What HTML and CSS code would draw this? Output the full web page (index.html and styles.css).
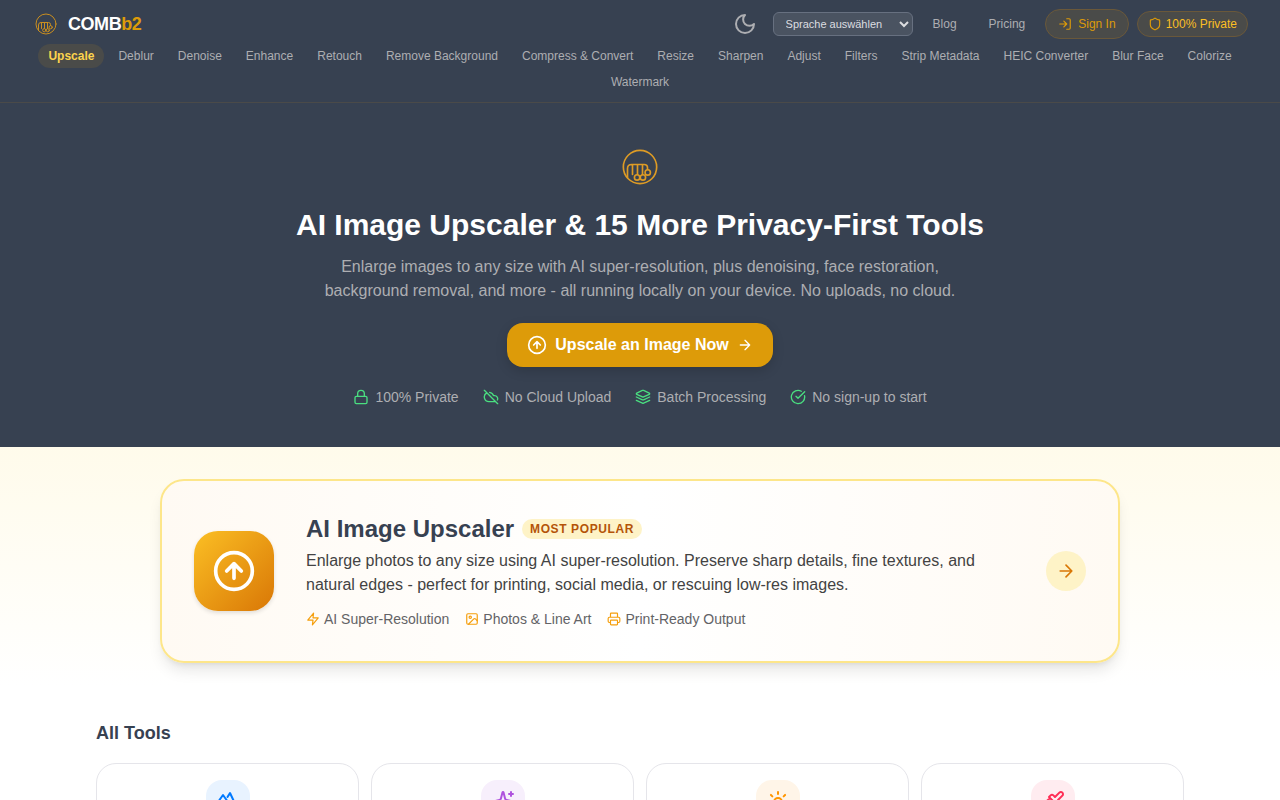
FILE: index.html
```
<!DOCTYPE html>
<html lang="en">
<head>
	<meta charset="UTF-8">
	<meta name="viewport" content="width=device-width, initial-scale=1">
	<title>COMBb2 - AI Image Upscaler</title>
	<link rel="stylesheet" href="styles.css">
</head>
<body>
	<!-- shared icons -->
	<svg class="sprite" aria-hidden="true">
		<symbol id="logo" viewBox="0 0 48 48">
			<circle cx="24" cy="24" r="20"/>
			<path d="M9 37V26q0-5 5-5h15q4 0 4 4v2M15 21v12M21 21v12M27 21v12"/>
			<circle cx="20.500" cy="36.500" r="3.200"/>
			<circle cx="27.500" cy="36.500" r="3.200"/>
			<circle cx="33.300" cy="30.500" r="3.200"/>
		</symbol>
		<symbol id="up" viewBox="0 0 24 24"><circle cx="12" cy="12" r="10"/><path d="m16 12-4-4-4 4M12 16V8"/></symbol>
		<symbol id="arrow" viewBox="0 0 24 24"><path d="M5 12h14M12 5l7 7-7 7"/></symbol>
	</svg>

	<header class="header">
		<div class="topbar">
			<a class="brand" href="#"><svg class="icon"><use href="#logo"/></svg><span>COMB<b>b2</b></span></a>
			<div class="actions">
				<button class="theme" type="button" aria-label="Toggle dark mode">
					<svg class="icon" viewBox="0 0 24 24"><path d="M12 3a6 6 0 0 0 9 9 9 9 0 1 1-9-9Z"/></svg>
				</button>
				<select class="language" aria-label="Language">
					<option>Sprache auswählen</option>
				</select>
				<a class="link" href="#">Blog</a>
				<a class="link" href="#">Pricing</a>
				<a class="signin" href="#">
					<svg class="icon" viewBox="0 0 24 24"><path d="M15 3h4a2 2 0 0 1 2 2v14a2 2 0 0 1-2 2h-4M10 17l5-5-5-5M15 12H3"/></svg>
					Sign In
				</a>
				<span class="private">
					<svg class="icon" viewBox="0 0 24 24"><path d="M20 13c0 5-3.500 7.500-7.660 8.950a1 1 0 0 1-.67-.01C7.500 20.500 4 18 4 13V6a1 1 0 0 1 1-1c2 0 4.500-1.200 6.240-2.720a1.170 1.170 0 0 1 1.520 0C14.510 3.810 17 5 19 5a1 1 0 0 1 1 1z"/></svg>
					100% Private
				</span>
			</div>
		</div>
		<nav class="tools-nav">
			<a class="active" href="#">Upscale</a>
			<a href="#">Deblur</a>
			<a href="#">Denoise</a>
			<a href="#">Enhance</a>
			<a href="#">Retouch</a>
			<a href="#">Remove Background</a>
			<a href="#">Compress &amp; Convert</a>
			<a href="#">Resize</a>
			<a href="#">Sharpen</a>
			<a href="#">Adjust</a>
			<a href="#">Filters</a>
			<a href="#">Strip Metadata</a>
			<a href="#">HEIC Converter</a>
			<a href="#">Blur Face</a>
			<a href="#">Colorize</a>
			<a href="#">Watermark</a>
		</nav>
	</header>

	<section class="hero">
		<svg class="icon hero-logo"><use href="#logo"/></svg>
		<h1>AI Image Upscaler &amp; 15 More Privacy-First Tools</h1>
		<p>Enlarge images to any size with AI super-resolution, plus denoising, face restoration, background removal, and more - all running locally on your device. No uploads, no cloud.</p>
		<a class="cta" href="#">
			<svg class="icon"><use href="#up"/></svg>
			Upscale an Image Now
			<svg class="icon small"><use href="#arrow"/></svg>
		</a>
		<ul class="trust">
			<li><svg class="icon" viewBox="0 0 24 24"><rect x="3" y="11" width="18" height="11" rx="2"/><path d="M7 11V7a5 5 0 0 1 10 0v4"/></svg>100% Private</li>
			<li><svg class="icon" viewBox="0 0 24 24"><path d="m2 2 20 20M5.780 5.780A7 7 0 0 0 9 19h8.500a4.500 4.500 0 0 0 1.310-.2M21.530 16.500A4.500 4.500 0 0 0 17.500 10h-1.790A7 7 0 0 0 10 5.070"/></svg>No Cloud Upload</li>
			<li><svg class="icon" viewBox="0 0 24 24"><path d="m12.830 2.180a2 2 0 0 0-1.660 0L2.600 6.080a1 1 0 0 0 0 1.830l8.580 3.910a2 2 0 0 0 1.660 0l8.580-3.900a1 1 0 0 0 0-1.830ZM22 12l-9.170 4.160a2 2 0 0 1-1.660 0L2 12M22 17l-9.170 4.160a2 2 0 0 1-1.660 0L2 17"/></svg>Batch Processing</li>
			<li><svg class="icon" viewBox="0 0 24 24"><path d="M21.800 10A10 10 0 1 1 17 3.340M9 11l3 3L22 4"/></svg>No sign-up to start</li>
		</ul>
	</section>

	<main class="main">
		<a class="featured" href="#">
			<span class="featured-icon"><svg class="icon"><use href="#up"/></svg></span>
			<div class="featured-text">
				<h2>AI Image Upscaler <span class="badge">Most Popular</span></h2>
				<p>Enlarge photos to any size using AI super-resolution. Preserve sharp details, fine textures, and natural edges - perfect for printing, social media, or rescuing low-res images.</p>
				<ul class="features">
					<li><svg class="icon" viewBox="0 0 24 24"><path d="M13 2 3 14h9l-1 8 10-12h-9z"/></svg>AI Super-Resolution</li>
					<li><svg class="icon" viewBox="0 0 24 24"><rect x="3" y="3" width="18" height="18" rx="2"/><circle cx="9" cy="9" r="2"/><path d="m21 15-3.090-3.090a2 2 0 0 0-2.820 0L6 21"/></svg>Photos &amp; Line Art</li>
					<li><svg class="icon" viewBox="0 0 24 24"><path d="M6 18H4a2 2 0 0 1-2-2v-5a2 2 0 0 1 2-2h16a2 2 0 0 1 2 2v5a2 2 0 0 1-2 2h-2M6 9V3a1 1 0 0 1 1-1h10a1 1 0 0 1 1 1v6"/><rect x="6" y="14" width="12" height="8" rx="1"/></svg>Print-Ready Output</li>
				</ul>
			</div>
			<span class="go"><svg class="icon"><use href="#arrow"/></svg></span>
		</a>

		<section class="all-tools">
			<h2>All Tools</h2>
			<div class="grid">
				<a class="card blue" href="#" aria-label="Deblur"><span><svg class="icon" viewBox="0 0 24 24"><path d="m2 12 5-7 5 7M11.500 7 14 3l8 17H2"/></svg></span></a>
				<a class="card purple" href="#" aria-label="Denoise"><span><svg class="icon" viewBox="0 0 24 24"><path d="M9.940 15.500A2 2 0 0 0 8.500 14.060l-6.130-1.580a.5.5 0 0 1 0-.96L8.500 9.940A2 2 0 0 0 9.940 8.500l1.580-6.130a.5.5 0 0 1 .96 0L14.060 8.500a2 2 0 0 0 1.440 1.440l6.130 1.580a.5.5 0 0 1 0 .96l-6.130 1.580a2 2 0 0 0-1.440 1.440l-1.580 6.130a.5.5 0 0 1-.96 0zM20 2v4M22 4h-4"/></svg></span></a>
				<a class="card orange" href="#" aria-label="Enhance"><span><svg class="icon" viewBox="0 0 24 24"><circle cx="12" cy="12" r="4"/><path d="M12 2v2M12 20v2M4.930 4.930l1.410 1.410M17.660 17.660l1.410 1.410M2 12h2M20 12h2M6.340 17.660l-1.410 1.410M19.070 4.930l-1.410 1.410"/></svg></span></a>
				<a class="card pink" href="#" aria-label="Retouch"><span><svg class="icon" viewBox="0 0 24 24"><path d="M18.370 2.630 14 7l-1.590-1.590a2 2 0 0 0-2.820 0L8 7l9 9 1.590-1.590a2 2 0 0 0 0-2.820L17 10l4.370-4.370a2.120 2.120 0 1 0-3-3ZM9 8c-2 3-4 3.500-7 4l8 10c2-1 6-5 6-7M14.500 17.500 4.500 15"/></svg></span></a>
			</div>
		</section>
	</main>
</body>
</html>
```
FILE: styles.css
```
* {
	box-sizing: border-box;
}
body {
	margin: 0;
	font-family: "Liberation Sans", Arial, sans-serif;
	font-size: 16px;
	line-height: 24px;
	color: #374151;
	background: #fff;
}
a {
	color: inherit;
	text-decoration: none;
}
h1, h2, p, ul {
	margin: 0;
	padding: 0;
}
ul {
	list-style: none;
}
.sprite {
	display: none;
}
.icon {
	width: 16px;
	height: 16px;
	flex-shrink: 0;
	fill: none;
	stroke: currentColor;
	stroke-width: 2;
	stroke-linecap: round;
	stroke-linejoin: round;
}

/* header */
.header {
	background: #374151;
	border-bottom: 1px solid #4a4a49;
	color: #adaeb2;
	font-size: 12px;
	line-height: 16px;
	padding-bottom: 8px;
}
.topbar {
	display: flex;
	align-items: center;
	justify-content: space-between;
	height: 44px;
	padding: 4px 32px 0;
}
.brand {
	display: flex;
	align-items: center;
	gap: 8px;
	font-size: 18px;
	font-weight: bold;
	letter-spacing: -0.025em;
	color: #fff;
}
.brand .icon {
	width: 28px;
	height: 28px;
	padding: 2px;
	color: #c98e20;
}
.brand b {
	color: #dd9b09;
}
.actions {
	display: flex;
	align-items: center;
}
.theme {
	display: flex;
	padding: 0;
	margin-right: 16px;
	border: 0;
	background: none;
	color: #adaeb2;
}
.theme .icon {
	width: 24px;
	height: 24px;
}
.language {
	width: 140px;
	height: 24px;
	padding: 0 8px;
	border: 1px solid #677080;
	border-radius: 6px;
	background: #4a5361;
	color: #dcdde0;
	font-family: inherit;
	font-size: 11px;
}
.link {
	padding: 6px 12px;
	margin-left: 8px;
}
.signin, .private {
	display: flex;
	align-items: center;
	margin-left: 8px;
	border: 1px solid #6a583a;
	border-radius: 16px;
	background: #4a4b49;
}
.signin {
	gap: 6px;
	padding: 6px 12px;
	color: #dd9b09;
}
.signin .icon {
	width: 14px;
	height: 14px;
}
.private {
	gap: 4px;
	padding: 4px 10px;
	color: #fbbf24;
}
.private .icon {
	width: 14px;
	height: 14px;
	color: #dd9b09;
}
.tools-nav {
	display: flex;
	flex-wrap: wrap;
	justify-content: center;
	gap: 2px 4px;
	padding: 0 32px;
}
.tools-nav a {
	padding: 4px 10px;
	border-radius: 12px;
}
.tools-nav .active {
	background: #4a4b49;
	color: #fcd34d;
	font-weight: bold;
}

/* hero */
.hero {
	display: flex;
	flex-direction: column;
	align-items: center;
	padding: 44px 24px 40px;
	background: #374151;
	color: #adaeb2;
	text-align: center;
}
.hero-logo {
	width: 40px;
	height: 40px;
	color: #dd9b25;
}
.hero h1 {
	margin-top: 20px;
	font-size: 30px;
	line-height: 36px;
	color: #fff;
}
.hero p {
	max-width: 672px;
	margin-top: 12px;
}
.cta {
	display: flex;
	align-items: center;
	gap: 8px;
	margin-top: 20px;
	padding: 10px 20px;
	border-radius: 16px;
	background: #dd9b09;
	color: #fff;
	font-weight: bold;
	box-shadow: 0 4px 12px rgba(0, 0, 0, 0.15);
}
.cta .icon {
	width: 20px;
	height: 20px;
}
.cta .small {
	width: 16px;
	height: 16px;
}
.trust {
	display: flex;
	flex-wrap: wrap;
	justify-content: center;
	gap: 8px 24px;
	margin-top: 20px;
	font-size: 14px;
	line-height: 20px;
}
.trust li {
	display: flex;
	align-items: center;
	gap: 6px;
}
.trust .icon {
	color: #4ade80;
}

/* main */
.main {
	padding: 32px 24px;
	background: linear-gradient(#fffbeb, #fff 240px);
}
.featured {
	display: flex;
	align-items: center;
	gap: 32px;
	max-width: 960px;
	margin: 0 auto;
	padding: 32px;
	border: 2px solid #fde68a;
	border-radius: 24px;
	background: linear-gradient(90deg, #fffaf3, #fff 50%, #fffaf3);
	box-shadow: 0 10px 15px -3px rgba(0, 0, 0, 0.1), 0 4px 6px -4px rgba(0, 0, 0, 0.1);
}
.featured-icon {
	display: flex;
	align-items: center;
	justify-content: center;
	flex-shrink: 0;
	width: 80px;
	height: 80px;
	border-radius: 24px;
	background: linear-gradient(135deg, #fbbf24, #d97706);
	color: #fff;
	box-shadow: 0 2px 4px rgba(0, 0, 0, 0.12);
}
.featured-icon .icon {
	width: 44px;
	height: 44px;
}
.featured-text {
	flex: 1;
}
.featured h2 {
	display: flex;
	align-items: center;
	gap: 8px;
	font-size: 24px;
	line-height: 32px;
}
.badge {
	padding: 2px 8px;
	border-radius: 10px;
	background: #fef3c7;
	color: #b45309;
	font-size: 12px;
	line-height: 16px;
	letter-spacing: 0.05em;
	text-transform: uppercase;
}
.featured p {
	max-width: 700px;
	margin-top: 4px;
	color: #434343;
}
.features {
	display: flex;
	flex-wrap: wrap;
	gap: 4px 16px;
	margin-top: 12px;
	color: #636366;
	font-size: 14px;
	line-height: 20px;
}
.features li {
	display: flex;
	align-items: center;
	gap: 4px;
}
.features .icon {
	width: 14px;
	height: 14px;
	color: #f59e0b;
}
.go {
	display: flex;
	align-items: center;
	justify-content: center;
	flex-shrink: 0;
	width: 40px;
	height: 40px;
	border-radius: 50%;
	background: #fef3c7;
	color: #d97706;
}
.go .icon {
	width: 20px;
	height: 20px;
}
.all-tools {
	max-width: 1088px;
	margin: 56px auto 0;
}
.all-tools h2 {
	margin-bottom: 16px;
	font-size: 18px;
	line-height: 28px;
}
.grid {
	display: grid;
	grid-template-columns: repeat(4, 1fr);
	gap: 12px;
}
.card {
	display: flex;
	justify-content: center;
	padding: 16px;
	border: 1px solid #e5e5ea;
	border-radius: 20px;
	background: #fff;
}
.card span {
	display: flex;
	align-items: center;
	justify-content: center;
	width: 44px;
	height: 44px;
	border-radius: 16px;
}
.card .icon {
	width: 24px;
	height: 24px;
}
.blue span {
	background: #e8f3ff;
	color: #007aff;
}
.purple span {
	background: #f7effc;
	color: #af52de;
}
.orange span {
	background: #fff5e8;
	color: #ff9500;
}
.pink span {
	background: #ffecf0;
	color: #ff2d55;
}
```
